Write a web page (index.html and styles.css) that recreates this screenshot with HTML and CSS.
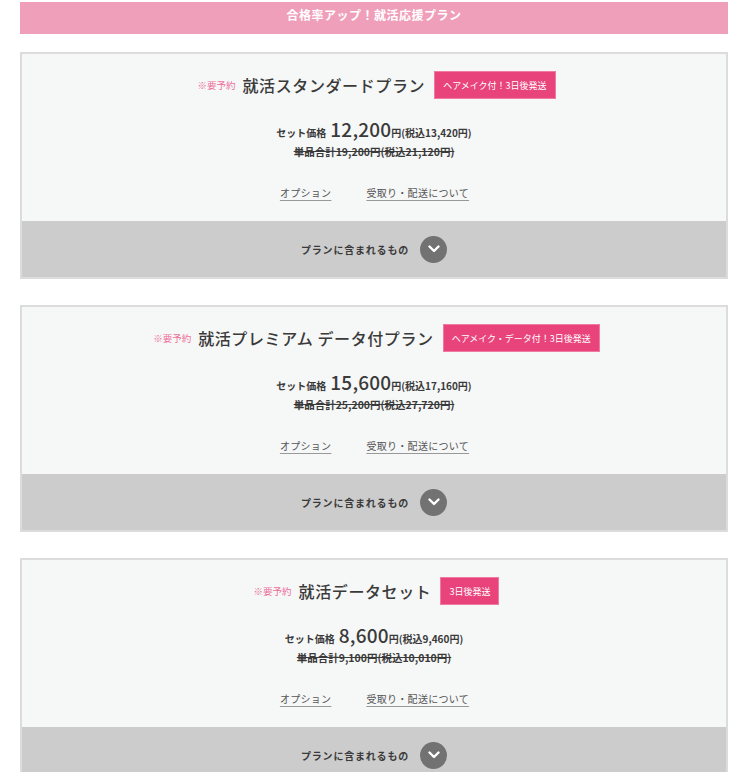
FILE: index.html
```html
<!DOCTYPE html>
<html lang="ja">
<head>
    <meta charset="UTF-8">
    <meta name="viewport" content="width=device-width, initial-scale=1.0">
    <title>就活応援プラン</title>
    <link rel="stylesheet" href="styles.css">
</head>
<body>
    <main class="plans">
        <h2 class="plans-heading">合格率アップ！就活応援プラン</h2>

        <section class="plan">
            <div class="plan-body">
                <div class="plan-title">
                    <span class="plan-note">※要予約</span>
                    <h3 class="plan-name">就活スタンダードプラン</h3>
                    <span class="plan-badge">ヘアメイク付！3日後発送</span>
                </div>
                <div class="plan-price">
                    <p class="price-set"><span class="price-label">セット価格</span><span class="price-num">12,200</span><span class="price-tax">円(税込13,420円)</span></p>
                    <p class="price-total">単品合計19,200円(税込21,120円)</p>
                </div>
                <div class="plan-links">
                    <a href="#option">オプション</a>
                    <a href="#delivery">受取り・配送について</a>
                </div>
            </div>
            <button class="plan-toggle">
                <span>プランに含まれるもの</span>
                <span class="toggle-icon"><svg width="12" height="8" viewBox="0 0 12 8"><path d="M1.5 1.5 L6 6 L10.5 1.5" fill="none" stroke="#fff" stroke-width="2.4" stroke-linecap="round" stroke-linejoin="round"/></svg></span>
            </button>
        </section>

        <section class="plan">
            <div class="plan-body">
                <div class="plan-title">
                    <span class="plan-note">※要予約</span>
                    <h3 class="plan-name">就活プレミアム データ付プラン</h3>
                    <span class="plan-badge">ヘアメイク・データ付！3日後発送</span>
                </div>
                <div class="plan-price">
                    <p class="price-set"><span class="price-label">セット価格</span><span class="price-num">15,600</span><span class="price-tax">円(税込17,160円)</span></p>
                    <p class="price-total">単品合計25,200円(税込27,720円)</p>
                </div>
                <div class="plan-links">
                    <a href="#option">オプション</a>
                    <a href="#delivery">受取り・配送について</a>
                </div>
            </div>
            <button class="plan-toggle">
                <span>プランに含まれるもの</span>
                <span class="toggle-icon"><svg width="12" height="8" viewBox="0 0 12 8"><path d="M1.5 1.5 L6 6 L10.5 1.5" fill="none" stroke="#fff" stroke-width="2.4" stroke-linecap="round" stroke-linejoin="round"/></svg></span>
            </button>
        </section>

        <section class="plan">
            <div class="plan-body">
                <div class="plan-title">
                    <span class="plan-note">※要予約</span>
                    <h3 class="plan-name">就活データセット</h3>
                    <span class="plan-badge">3日後発送</span>
                </div>
                <div class="plan-price">
                    <p class="price-set"><span class="price-label">セット価格</span><span class="price-num">8,600</span><span class="price-tax">円(税込9,460円)</span></p>
                    <p class="price-total">単品合計9,100円(税込10,010円)</p>
                </div>
                <div class="plan-links">
                    <a href="#option">オプション</a>
                    <a href="#delivery">受取り・配送について</a>
                </div>
            </div>
            <button class="plan-toggle">
                <span>プランに含まれるもの</span>
                <span class="toggle-icon"><svg width="12" height="8" viewBox="0 0 12 8"><path d="M1.5 1.5 L6 6 L10.5 1.5" fill="none" stroke="#fff" stroke-width="2.4" stroke-linecap="round" stroke-linejoin="round"/></svg></span>
            </button>
        </section>
    </main>
</body>
</html>
```

FILE: styles.css
```css
body {
    margin: 0;
    padding: 0;
    background-color: #fff;
    color: #3a3a3a;
    font-family: "Noto Sans CJK JP", "Noto Sans", sans-serif;
}
.plans {
    padding: 2px 22px 0 20px;
}
.plans-heading {
    margin: 0 0 18px;
    height: 32px;
    padding-top: 5px;
    box-sizing: border-box;
    background-color: #f09fba;
    color: #fff;
    font-size: 12px;
    font-weight: bold;
    text-align: center;
    line-height: 16px;
    letter-spacing: 0.5px;
}
.plan {
    border: 2px solid #dcdcdc;
    background-color: #f6f7f7;
    margin-bottom: 26px;
}
.plan-body {
    padding: 17px 0 19px;
    text-align: center;
}
.plan-title {
    display: flex;
    justify-content: center;
    align-items: center;
    height: 28px;
    padding-left: 5px;
}
.plan-note {
    color: #ec6f9a;
    font-size: 9.5px;
    margin-right: 7px;
}
.plan-name {
    margin: 0 9px 0 0;
    font-size: 16px;
    font-weight: 500;
    letter-spacing: 0.6px;
    color: #3a3a3a;
}
.plan-badge {
    display: flex;
    align-items: center;
    height: 28px;
    box-sizing: border-box;
    padding: 0 8px;
    background-color: #e8437b;
    border: 1px solid #f07aa2;
    color: #fff;
    font-size: 9px;
}
.plan-price {
    margin-top: 18px;
}
.plan-price p {
    margin: 0;
}
.price-set {
    height: 24px;
    line-height: 24px;
    font-weight: bold;
}
.price-label {
    font-size: 10px;
    margin-right: 4px;
}
.price-num {
    font-size: 19px;
    font-weight: 500;
    letter-spacing: 0.2px;
}
.price-tax {
    font-size: 10px;
}
.price-total {
    height: 21px;
    line-height: 21px;
    font-size: 10.5px;
    font-weight: bold;
    text-decoration: line-through;
}
.plan-links {
    margin-top: 22px;
    height: 18px;
    display: flex;
    justify-content: center;
    gap: 35px;
    padding-left: 1px;
}
.plan-links a {
    color: #555;
    font-size: 10px;
    line-height: 18px;
    letter-spacing: 0.3px;
    text-decoration: underline;
    text-decoration-color: #999;
    text-underline-offset: 3px;
}
.plan-toggle {
    display: flex;
    width: 100%;
    height: 56px;
    justify-content: center;
    align-items: center;
    gap: 11px;
    border: 0;
    background-color: #cccccc;
    color: #3a3a3a;
    font-family: inherit;
    font-size: 10px;
    font-weight: bold;
    letter-spacing: 0.8px;
    cursor: pointer;
}
.toggle-icon {
    display: flex;
    width: 27px;
    height: 27px;
    border-radius: 50%;
    background-color: #727272;
    justify-content: center;
    align-items: center;
}
```
